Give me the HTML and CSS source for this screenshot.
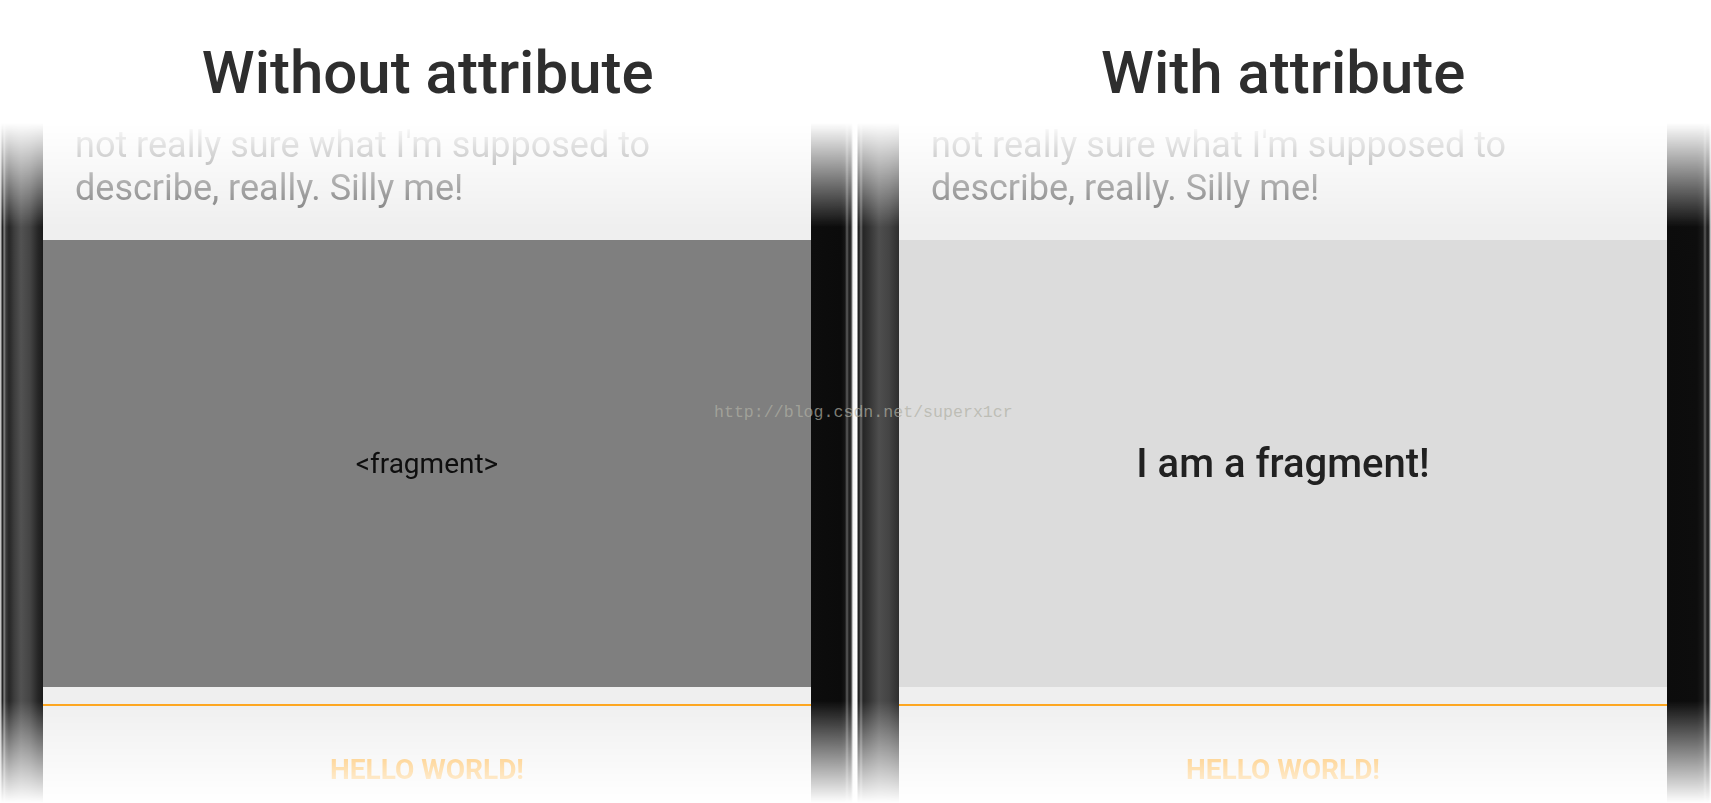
FILE: index.html
```html
<!DOCTYPE html>
<html lang="en">
<head>
  <meta charset="UTF-8" />
  <meta name="viewport" content="width=device-width, initial-scale=1.0"/>
  <title>Fragment attribute comparison</title>
  <link rel="stylesheet" href="styles.css">
</head>
<body>
  <div class="header">
    <h1>Without attribute</h1>
    <h1>With attribute</h1>
  </div>

  <div class="stage">
    <div class="devices">
      <div class="bezel bezel-left"></div>

      <div class="screen">
        <div class="description">
          <p>not really sure what I'm supposed to describe, really. Silly me!</p>
        </div>
        <div class="fragment fragment-raw">&lt;fragment&gt;</div>
        <div class="spacer"></div>
        <div class="actions">
          <span class="action">HELLO WORLD!</span>
        </div>
      </div>

      <div class="bezel bezel-mid"></div>

      <div class="screen">
        <div class="description">
          <p>not really sure what I'm supposed to describe, really. Silly me!</p>
        </div>
        <div class="fragment fragment-inflated">I am a fragment!</div>
        <div class="spacer"></div>
        <div class="actions">
          <span class="action">HELLO WORLD!</span>
        </div>
      </div>

      <div class="bezel bezel-right"></div>
    </div>

    <div class="watermark">http://blog.csdn.net/superx1cr</div>
  </div>
</body>
</html>
```

FILE: styles.css
```css
:root {
  --screen-bg: #efefef;
  --accent: #fda318;
  --title: #2e2e2e;
}
* {
  box-sizing: border-box;
}
body {
  margin: 0;
  background: #fff;
  font-family: Roboto, "Noto Sans", sans-serif;
  overflow: hidden;
}
.header {
  display: grid;
  grid-template-columns: 1fr 1fr;
  height: 123px;
  padding-top: 43px;
}
.header h1 {
  margin: 0;
  text-align: center;
  font-size: 60px;
  line-height: 60px;
  font-weight: 500;
  color: var(--title);
}
.stage {
  position: relative;
}
.devices {
  display: grid;
  grid-template-columns: 43px 768px 88px 768px 44px;
  height: 680px;
  -webkit-mask-image: linear-gradient(to bottom, transparent 0, #000 104px, #000 calc(100% - 102px), transparent 100%);
  mask-image: linear-gradient(to bottom, transparent 0, #000 104px, #000 calc(100% - 102px), transparent 100%);
}
.bezel-left {
  background: linear-gradient(to right, #c4c4c4 0, #c4c4c4 1px, #1e1e1e 2px, #262626 3px, #8c8c8c 4px, #3a3a3a 6px, #262626 9px, #3c3c3c 14px, #525252 21px, #444 30px, #262626 38px, #1a1a1a 43px);
}
.bezel-mid {
  background: linear-gradient(to right, #0d0d0d 0, #0b0b0b 30px, #151515 34px, #5e5e5e 36px, #1e1e1e 38px, #2a2a2a 40px, #f2f2f2 42px, #ffffff 46px, #222 47px, #1c1c1c 48px, #6a6a6a 50px, #262626 52px, #333 58px, #4e4e4e 68px, #444 78px, #2e2e2e 88px);
}
.bezel-right {
  background: linear-gradient(to right, #0c0c0c 0, #0d0d0d 30px, #1a1a1a 36px, #5a5a5a 38px, #1c1c1c 40px, #2a2a2a 42px, #b0b0b0 43px, #d0d0d0 44px);
}
.screen {
  display: flex;
  flex-direction: column;
  background: var(--screen-bg);
}
.description {
  height: 117px;
  padding: 1px 32px 0;
}
.description p {
  margin: 0;
  font-size: 36px;
  line-height: 43px;
  color: #707070;
  width: 640px;
}
.fragment {
  height: 447px;
  display: flex;
  align-items: center;
  justify-content: center;
}
.fragment-raw {
  background: #7f7f7f;
  font-size: 28px;
  color: #0e0e0e;
}
.fragment-inflated {
  background: #dcdcdc;
  font-size: 40px;
  font-weight: 500;
  color: #212121;
}
.spacer {
  height: 19px;
  border-bottom: 2px solid var(--accent);
}
.actions {
  flex: 1;
  text-align: center;
  padding-top: 46px;
}
.action {
  font-size: 28px;
  line-height: 36px;
  font-weight: 700;
  color: var(--accent);
}
.watermark {
  position: absolute;
  left: 714px;
  top: 280px;
  font-family: "Liberation Mono", monospace;
  font-size: 16.6px;
  color: rgba(176, 176, 165, 0.7);
  pointer-events: none;
}
```
